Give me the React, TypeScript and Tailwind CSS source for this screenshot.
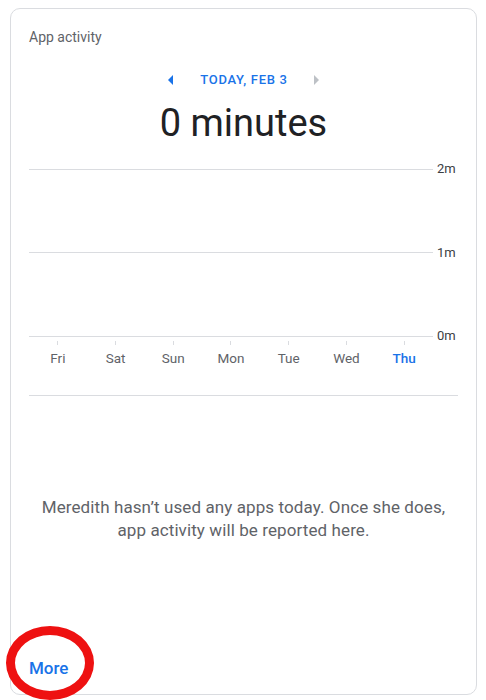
import React from "react"

const days = ["Fri", "Sat", "Sun", "Mon", "Tue", "Wed", "Thu"]
const levels = ["2m", "1m", "0m"]

export default function App() {
  return (
    <div className="relative h-[700px] w-[486px] overflow-hidden bg-white font-['Roboto','Liberation_Sans',sans-serif]">
      <div className="ml-[10px] mt-[8px] flex h-[687px] w-[467px] flex-col rounded-[10px] border border-[#dadce0] px-[18px]">
        {/* title */}
        <div className="pt-[18px] text-[14px] leading-[20px] text-[#5f6368]">App activity</div>

        {/* date switcher */}
        <div className="mt-[25px] flex items-center justify-center text-[13px] leading-[16px]">
          <svg width="5" height="10" viewBox="0 0 5 10" className="mr-[27px]">
            <path d="M5 0 L0 5 L5 10 Z" fill="#1a73e8" />
          </svg>
          <span className="font-medium tracking-[0.7px] text-[#1a73e8]">TODAY, FEB 3</span>
          <svg width="5" height="10" viewBox="0 0 5 10" className="ml-[26px]">
            <path d="M0 0 L5 5 L0 10 Z" fill="#bdc1c6" />
          </svg>
        </div>

        {/* total */}
        <div className="mt-[13px] text-center text-[38px] leading-[44px] text-[#202124]">0 minutes</div>

        {/* chart */}
        <div className="mt-[16px] flex h-[183px] flex-col justify-between">
          {levels.map((l) => (
            <div key={l} className="flex h-[16px] items-center">
              <div className="h-px flex-1 bg-[#dadce0]" />
              <span className="w-[25px] pl-[4px] text-[13px] leading-[16px] text-[#3c4043]">{l}</span>
            </div>
          ))}
        </div>
        <div className="mr-[25px] grid grid-cols-7">
          {days.map((d, i) => (
            <div key={d} className="flex flex-col items-center">
              <div className="mt-[-3px] h-[4px] w-px bg-[#dadce0]" />
              <span
                className={
                  i === 6
                    ? "mt-[4px] text-[13.5px] leading-[18px] font-medium text-[#1a73e8]"
                    : "mt-[4px] text-[13.5px] leading-[18px] text-[#5f6368]"
                }
              >
                {d}
              </span>
            </div>
          ))}
        </div>

        <div className="mt-[28px] h-px bg-[#dadce0]" />

        {/* empty state */}
        <p className="mt-[100px] text-center text-[17px] leading-[23px] tracking-[0.1px] text-[#5f6368]">
          Meredith hasn’t used any apps today. Once she does,
          <br />
          app activity will be reported here.
        </p>

        <div className="mt-auto pb-[16px] text-[17px] font-medium leading-[20px] text-[#1a73e8]">More</div>
      </div>

      {/* annotation ring */}
      <div className="absolute left-[6px] top-[626px] h-[74px] w-[88px] rounded-[50%] border-[9px] border-[#ee1111]" />
    </div>
  )
}
